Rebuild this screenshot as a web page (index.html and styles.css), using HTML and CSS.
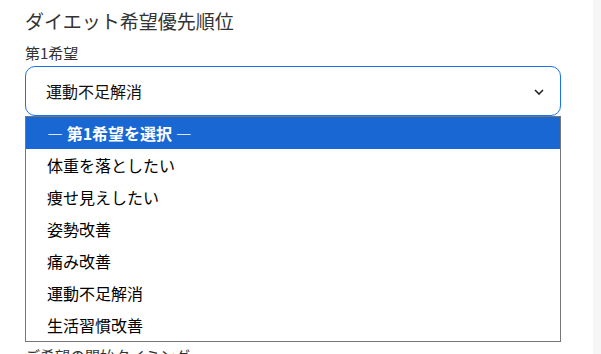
FILE: index.html
```html
<!DOCTYPE html>
<html lang="ja">
<head>
    <meta charset="UTF-8">
    <meta name="viewport" content="width=device-width, initial-scale=1.0">
    <title>ダイエット希望優先順位</title>
    <link rel="stylesheet" href="styles.css">
</head>
<body>

<div class="page">
    <div class="form">
        <h2>ダイエット希望優先順位</h2>

        <div class="field">
            <label>第1希望</label>
            <div class="select-wrap">
                <div class="select open">
                    <span>運動不足解消</span>
                    <svg class="chevron" width="10" height="6" viewBox="0 0 10 6">
                        <path d="M1 1 L5 5 L9 1" fill="none" stroke="#222" stroke-width="1.6"/>
                    </svg>
                </div>
                <ul class="options">
                    <li class="active">— 第1希望を選択 —</li>
                    <li>体重を落としたい</li>
                    <li>痩せ見えしたい</li>
                    <li>姿勢改善</li>
                    <li>痛み改善</li>
                    <li>運動不足解消</li>
                    <li>生活習慣改善</li>
                </ul>
            </div>
        </div>

        <div class="field">
            <label>第2希望</label>
            <div class="select">
                <span>— 第2希望を選択 —</span>
            </div>
        </div>

        <div class="field">
            <label>第3希望</label>
            <div class="select">
                <span>— 第3希望を選択 —</span>
            </div>
        </div>

        <div class="field">
            <label>ご希望の開始タイミング</label>
            <div class="select">
                <span>— 選択してください —</span>
            </div>
        </div>
    </div>
    <div class="side"></div>
</div>

</body>
</html>
```

FILE: styles.css
```css
body {
    margin: 0;
    font-family: "Noto Sans CJK JP", "Noto Sans", sans-serif;
    background-color: #ffffff;
    overflow: hidden;
}
.page {
    display: flex;
    height: 354px;
}
.form {
    flex: 1;
    padding: 7px 32px 0 25px;
    background-color: white;
}
.side {
    width: 8px;
    background-color: #f6f6f6;
}
h2 {
    margin: 0 0 7px 0;
    font-size: 19px;
    line-height: 28px;
    font-weight: normal;
    color: #333;
}
.field {
    margin-bottom: 27px;
}
label {
    display: block;
    font-size: 15px;
    line-height: 22px;
    color: #333;
    margin-bottom: 2px;
}
.select-wrap {
    position: relative;
}
.select {
    height: 50px;
    box-sizing: border-box;
    border: 1px solid #c9c9c9;
    border-radius: 10px;
    padding: 0 16px 0 20px;
    display: flex;
    align-items: center;
    justify-content: space-between;
    font-size: 16px;
    color: #111;
}
.select.open {
    border-color: #1a73e8;
}
.chevron {
    margin-top: 1px;
}
.options {
    position: absolute;
    top: 50px;
    left: 0;
    right: 0;
    margin: 0;
    padding: 0;
    list-style: none;
    background-color: white;
    border: 1px solid #767676;
}
.options li {
    height: 32px;
    line-height: 32px;
    padding-left: 21px;
    font-size: 16px;
    color: #000;
}
.options li.active {
    background-color: #1967d2;
    color: white;
    font-weight: bold;
}
```
